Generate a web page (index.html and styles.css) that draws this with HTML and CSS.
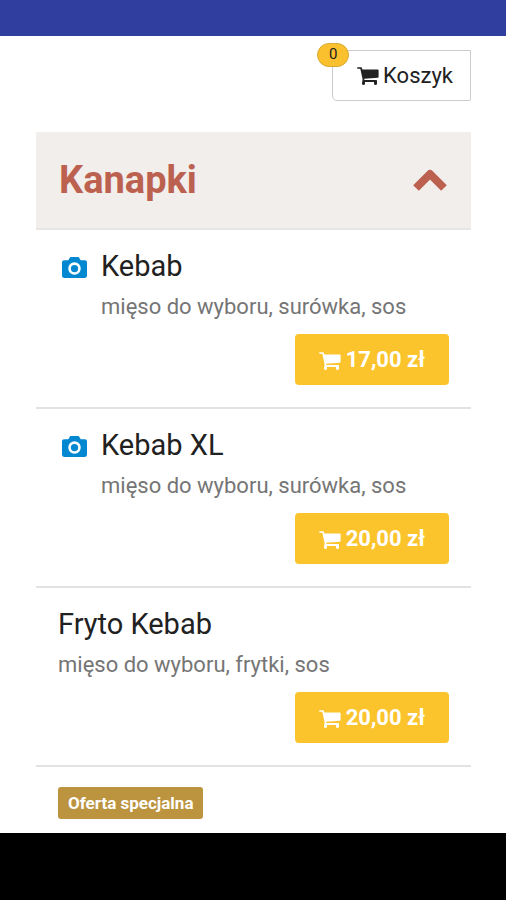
FILE: index.html
```html
<!DOCTYPE html>
<html lang="pl">
<head>
<meta charset="utf-8">
<meta name="viewport" content="width=device-width, initial-scale=1">
<title>Menu</title>
<link rel="stylesheet" href="styles.css">
</head>
<body>
<svg class="sprite" aria-hidden="true">
  <symbol id="cart" viewBox="0 0 22 20"><path d="M0 2Q0 1.200.8 1.200H4Q4.800 1.200 5 2L5.300 3.500H20.700Q21.600 3.500 21.600 4.400V10.800Q21.600 11.600 20.800 11.700L7.200 12.800 7.400 14H19.300Q20 14 20 14.800V17.500A1.500 1.500 0 1 1 17 17.500V16H8V17.500A1.500 1.500 0 1 1 5 17.500L5.600 13.200 3.300 2.800H.8Q0 2.800 0 2Z"/></symbol>
  <symbol id="camera" viewBox="0 0 24 22"><path fill-rule="evenodd" d="M8 1 6 4H2Q0 4 0 6V19Q0 21 2 21H22Q24 21 24 19V6Q24 4 22 4H18L16 1ZM12 6A6 6 0 1 1 12 18 6 6 0 1 1 12 6ZM12 8.500A3.500 3.500 0 1 0 12 15.500 3.500 3.500 0 1 0 12 8.500Z"/></symbol>
</svg>
<div class="topbar"></div>
<main class="page">
  <div class="basket-row">
    <button class="basket" type="button"><span class="badge">0</span><svg class="cart"><use href="#cart"/></svg>Koszyk</button>
  </div>
  <button class="category" type="button" aria-expanded="true"><span>Kanapki</span><svg class="chevron" viewBox="0 0 36 26"><path d="M4 21 18 7 32 21"/></svg></button>
  <article class="item">
    <svg class="camera"><use href="#camera"/></svg>
    <div class="details"><h2>Kebab</h2><p>mięso do wyboru, surówka, sos</p></div>
    <button class="price" type="button"><svg class="cart"><use href="#cart"/></svg>17,00 zł</button>
  </article>
  <article class="item">
    <svg class="camera"><use href="#camera"/></svg>
    <div class="details"><h2>Kebab XL</h2><p>mięso do wyboru, surówka, sos</p></div>
    <button class="price" type="button"><svg class="cart"><use href="#cart"/></svg>20,00 zł</button>
  </article>
  <article class="item">
    <div class="details"><h2>Fryto Kebab</h2><p>mięso do wyboru, frytki, sos</p></div>
    <button class="price" type="button"><svg class="cart"><use href="#cart"/></svg>20,00 zł</button>
  </article>
  <div class="offer"><span class="tag">Oferta specjalna</span></div>
</main>
<footer class="bottombar"></footer>
</body>
</html>
```
FILE: styles.css
```css
* { box-sizing: border-box; }
body {
  margin: 0;
  min-height: 100vh;
  display: flex;
  flex-direction: column;
  background: #fff;
  color: #212121;
  font-family: Roboto, sans-serif;
}
button { font-family: inherit; cursor: pointer; }
h2, p { margin: 0; font-weight: 400; }
.sprite { position: absolute; width: 0; height: 0; }
.topbar { height: 36px; background: #303f9f; }
.page { padding: 14px 35px 14px 36px; }
.basket-row { display: flex; justify-content: flex-end; margin-bottom: 31px; }
.basket {
  position: relative;
  display: flex;
  align-items: center;
  gap: 4px;
  height: 51px;
  padding: 0 17px 0 24px;
  border: 1px solid #ccc;
  border-radius: 2px 0 2px 5px;
  background: #fff;
  color: #212121;
  font-size: 22px;
}
.badge {
  position: absolute;
  top: -8px;
  left: -16px;
  width: 32px;
  height: 24px;
  border: 1px solid #d5ac38;
  border-radius: 12px;
  background: #fbc02d;
  font-size: 15px;
  line-height: 21px;
  text-align: center;
}
.cart { width: 22px; height: 20px; fill: currentColor; }
.category {
  display: flex;
  width: 100%;
  height: 98px;
  align-items: center;
  justify-content: space-between;
  padding: 0 23px;
  border: 0;
  border-bottom: 2px solid #e8e6e4;
  background: #f2eeeb;
  color: #bc6150;
  font-size: 38px;
  font-weight: 700;
}
.chevron {
  width: 36px;
  height: 26px;
  fill: none;
  stroke: currentColor;
  stroke-width: 8px;
  stroke-linejoin: round;
}
.item {
  display: grid;
  grid-template-columns: auto 1fr;
  padding: 16px 22px 22px;
  border-bottom: 2px solid #e2e2e2;
}
.camera { width: 25px; height: 23px; margin: 10px 14px 0 4px; fill: #0288d1; }
.details { grid-column-end: -1; }
.item h2 { font-size: 29px; line-height: 40px; }
.item p { font-size: 22px; line-height: 41px; color: #757575; }
.price {
  grid-column: 1 / -1;
  justify-self: end;
  display: flex;
  align-items: center;
  gap: 5px;
  height: 51px;
  margin-top: 7px;
  padding: 0 24px;
  border: 0;
  border-radius: 4px;
  background: #fbc42d;
  color: #fff;
  font-size: 22px;
  font-weight: 700;
}
.price .cart { margin-top: 3px; }
.offer { padding: 20px 22px 0; }
.tag {
  display: inline-block;
  padding: 0 10px;
  border-radius: 3px;
  background: #bc943f;
  color: #fff;
  font-size: 17px;
  font-weight: 700;
  line-height: 32px;
}
.bottombar { flex: 1; background: #000; }
```
